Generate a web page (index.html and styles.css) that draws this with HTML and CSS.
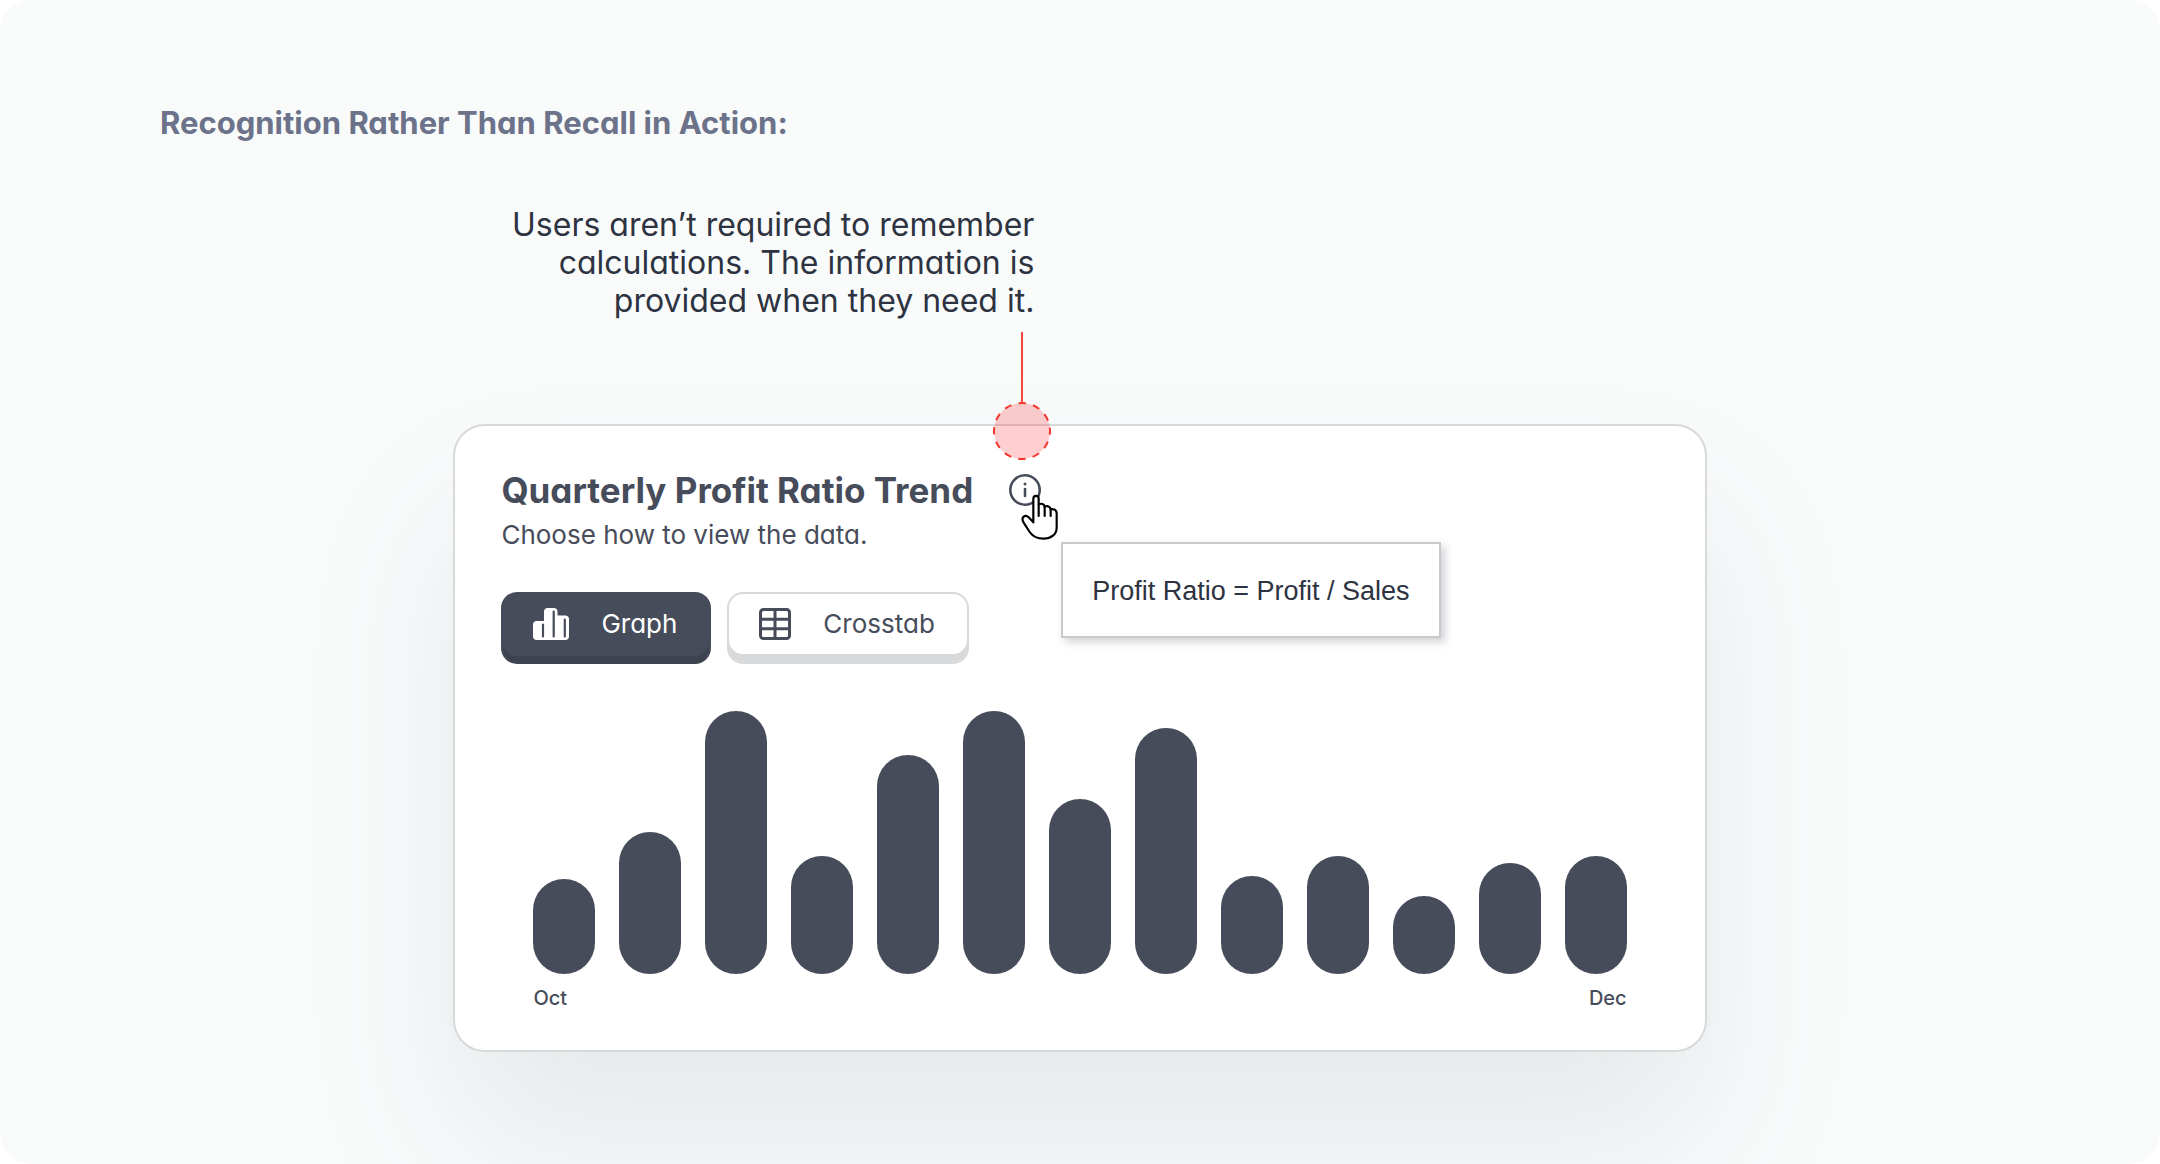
FILE: index.html
```html
<!DOCTYPE html>
<html lang="en">
<head>
<meta charset="utf-8">
<meta name="viewport" content="width=device-width, initial-scale=1">
<title>Recognition Rather Than Recall in Action</title>
<link rel="stylesheet" href="styles.css">
</head>
<body>
<main class="slide">
  <h1 class="slide-title">Recognition Rather Than Recall in Action:</h1>

  <div class="demo">
    <div class="callout">
      <p class="callout-text">Users aren’t required to remember<br>calculations. The information is<br>provided when they need it.</p>
      <svg class="callout-marker" width="60" height="130" viewBox="0 0 60 130" aria-hidden="true">
        <path d="M30 0V71" stroke="#f5443c" stroke-width="2"/>
        <circle cx="30" cy="99" r="28" fill="#ff0f0f" fill-opacity=".2" stroke="#f5352c" stroke-width="2" stroke-dasharray="7.33 7.33" stroke-dashoffset="3.66"/>
      </svg>
    </div>

    <section class="card">
      <div class="card-head">
        <h2 class="card-title">Quarterly Profit Ratio Trend</h2>
        <div class="info">
          <button class="info-button" type="button" aria-label="About this chart" aria-describedby="ratio-tip">
            <svg width="32" height="32" viewBox="0 0 32 32" aria-hidden="true">
              <circle cx="16" cy="16" r="14.7" fill="none" stroke="#474c5b" stroke-width="2.6"/>
              <circle cx="16" cy="10" r="1.5" fill="#474c5b"/>
              <path d="M16 15v7" stroke="#474c5b" stroke-width="2.6" stroke-linecap="round"/>
            </svg>
          </button>
          <svg class="pointer" width="38" height="46" viewBox="122 101 114 138" aria-hidden="true">
            <path d="M159 186V115c0-11 16-11 16 0v17c8-4 17-1 18 7c8-4 17 0 18 8c9-2 18 1 18 11v44c0 20-17 33-39 33c-22 0-33-7-42-20l-18-28c-10-17 5-26 15-16Z" fill="#fff" stroke="#000" stroke-width="6.5" stroke-linejoin="round"/>
            <path d="M175 132v35M193 139v28M211 147v20" stroke="#000" stroke-width="6.5" stroke-linecap="round"/>
          </svg>
          <div class="tooltip" id="ratio-tip" role="tooltip">Profit Ratio = Profit / Sales</div>
        </div>
      </div>
      <p class="card-subtitle">Choose how to view the data.</p>

      <div class="view-switch">
        <button class="view-button view-button-active" type="button" aria-pressed="true">
          <svg width="36" height="32" viewBox="0 0 36 32" aria-hidden="true">
            <path d="M3.500 13H11V3.500C11 1.500 12.500 0 14.500 0H21c2 0 3.500 1.500 3.500 3.500V7.500h8C34.500 7.500 36 9 36 11v17.500c0 2-1.500 3.500-3.500 3.500h-29C1.500 32 0 30.500 0 28.500V16.500c0-2 1.500-3.500 3.500-3.500Z" fill="#fff"/>
            <path d="M10 16.500v12M20.700 3.500v25M31.800 11.500v17" stroke="#474c5b" stroke-width="2.2" stroke-linecap="round"/>
          </svg>
          <span>Graph</span>
        </button>
        <button class="view-button" type="button" aria-pressed="false">
          <svg width="32" height="32" viewBox="0 0 32 32" fill="none" stroke="#474c5b" stroke-width="3" aria-hidden="true">
            <rect x="1.500" y="1.500" width="29" height="29" rx="3"/>
            <path d="M16 1.500v29M1.500 11.300h29M1.500 20.700h29"/>
          </svg>
          <span>Crosstab</span>
        </button>
      </div>

      <div class="chart" role="img" aria-label="Profit ratio, October to December">
        <div class="bars">
          <i class="bar" style="height:36%"></i>
          <i class="bar" style="height:54%"></i>
          <i class="bar" style="height:100%"></i>
          <i class="bar" style="height:45%"></i>
          <i class="bar" style="height:83.3%"></i>
          <i class="bar" style="height:100%"></i>
          <i class="bar" style="height:66.7%"></i>
          <i class="bar" style="height:93.6%"></i>
          <i class="bar" style="height:37.3%"></i>
          <i class="bar" style="height:45%"></i>
          <i class="bar" style="height:29.6%"></i>
          <i class="bar" style="height:42.3%"></i>
          <i class="bar" style="height:45%"></i>
        </div>
        <div class="axis"><span>Oct</span><span>Dec</span></div>
      </div>
    </section>
  </div>
</main>
</body>
</html>
```
FILE: styles.css
```css
:root {
  --ink: #474c5b;
  --ink-dark: #2e3341;
  --line: #d8d9da;
}

* {
  box-sizing: border-box;
}

body {
  margin: 0;
  background: #fff;
  color: var(--ink);
  font-family: Inter, "Liberation Sans", sans-serif;
  font-feature-settings: "cv11";
}

h1,
h2,
p {
  margin: 0;
}

button {
  font: inherit;
  font-feature-settings: inherit;
  color: inherit;
  cursor: pointer;
}

svg {
  display: block;
  flex: none;
}

.slide {
  min-height: 100vh;
  padding: 103px 160px 112px;
  border-radius: 32px;
  background: #f9fbfb;
  overflow: hidden;
}

.slide-title {
  color: #6b7289;
  font-size: 31px;
  font-weight: 700;
  line-height: 40px;
}

.demo {
  margin: 63px calc(16% - 1px) 0;
}

.callout {
  position: relative;
  width: 581px;
  margin-bottom: 104px;
}

.callout-text {
  color: var(--ink-dark);
  font-size: 32px;
  line-height: 38px;
  text-align: right;
}

.callout-marker {
  position: absolute;
  z-index: 1;
  top: 126px;
  right: -18px;
}

.card {
  padding: 40px 46px;
  border: 2px solid var(--line);
  border-radius: 32px;
  background: #fff;
  box-shadow: 0 96px 160px rgba(71, 92, 112, 0.11);
}

.card-head {
  display: flex;
  align-items: center;
  gap: 36px;
  height: 48px;
}

.card-title {
  font-size: 35px;
  font-weight: 700;
  line-height: 48px;
}

.info {
  position: relative;
}

.info-button {
  display: block;
  padding: 0;
  border: 0;
  background: none;
}

.pointer {
  position: absolute;
  top: 20px;
  left: 12px;
}

.tooltip {
  position: absolute;
  z-index: 1;
  top: 68px;
  left: 52px;
  padding: 27px 29px 25px;
  border: 2px solid #c9cacb;
  background: #fff;
  box-shadow: 4px 4px 8px rgba(71, 76, 91, 0.25);
  color: var(--ink-dark);
  font-family: "Liberation Sans", Arial, sans-serif;
  font-size: 27px;
  line-height: 40px;
  white-space: nowrap;
}

.card-subtitle {
  margin-top: 1px;
  font-size: 26px;
  line-height: 40px;
}

.view-switch {
  display: flex;
  gap: 16px;
  margin-top: 37px;
}

.view-button {
  display: flex;
  align-items: center;
  gap: 32px;
  height: 72px;
  padding: 0 32px 8px 30px;
  border: 2px solid var(--line);
  border-radius: 16px;
  background: #fff;
  box-shadow: inset 0 -8px var(--line);
  font-size: 26px;
  line-height: 40px;
}

.view-button-active {
  border-color: var(--ink);
  border-bottom-color: #3e4350;
  background: var(--ink);
  box-shadow: inset 0 -6px #3e4350;
  color: #fff;
}

.chart {
  margin-top: 47px;
  padding: 0 32px;
}

.bars {
  display: flex;
  align-items: flex-end;
  gap: 24px;
  height: 263px;
}

.bar {
  flex: 1;
  border-radius: 32px;
  background: var(--ink);
}

.axis {
  display: flex;
  justify-content: space-between;
  margin-top: 12px;
  font-size: 20px;
  font-weight: 500;
  line-height: 24px;
}
```
